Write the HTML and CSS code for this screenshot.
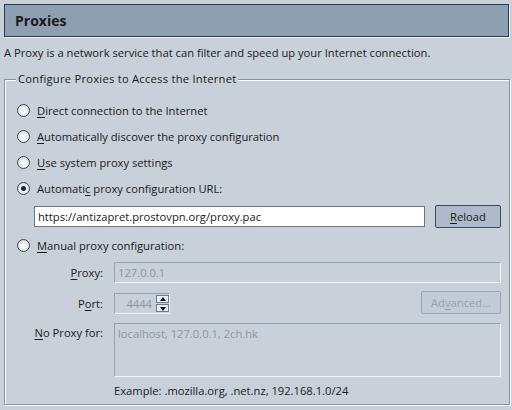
FILE: index.html
```html
<!DOCTYPE html>
<html lang="en">
<head>
    <meta charset="UTF-8">
    <title>Proxies</title>
    <link rel="stylesheet" href="styles.css">
</head>
<body>
    <div class="pane">
        <header class="pane-header">Proxies</header>
        <p class="pane-desc">A Proxy is a network service that can filter and speed up your Internet connection.</p>

        <fieldset class="group">
            <legend>Configure Proxies to Access the Internet</legend>

            <label class="radio-row"><input type="radio" name="mode"><span><u>D</u>irect connection to the Internet</span></label>
            <label class="radio-row"><input type="radio" name="mode"><span><u>A</u>utomatically discover the proxy configuration</span></label>
            <label class="radio-row"><input type="radio" name="mode"><span><u>U</u>se system proxy settings</span></label>
            <label class="radio-row"><input type="radio" name="mode" checked><span>Automati<u>c</u> proxy configuration URL:</span></label>

            <div class="url-row">
                <input class="field" type="text" value="https://antizapret.prostovpn.org/proxy.pac">
                <button class="btn"><u>R</u>eload</button>
            </div>

            <label class="radio-row"><input type="radio" name="mode"><span><u>M</u>anual proxy configuration:</span></label>

            <div class="manual">
                <span class="lbl"><u>P</u>roxy:</span>
                <input class="field disabled" type="text" value="127.0.0.1" disabled>

                <span class="lbl">P<u>o</u>rt:</span>
                <div class="port-row">
                    <div class="spin">
                        <input class="field disabled port" type="text" value="4444" disabled>
                        <div class="spin-btns">
                            <span class="arrow up"></span>
                            <span class="arrow down"></span>
                        </div>
                    </div>
                    <button class="btn" disabled>Ad<u>v</u>anced...</button>
                </div>

                <span class="lbl top"><u>N</u>o Proxy for:</span>
                <textarea class="field disabled area" disabled>localhost, 127.0.0.1, 2ch.hk</textarea>

                <span></span>
                <span class="example">Example: .mozilla.org, .net.nz, 192.168.1.0/24</span>
            </div>
        </fieldset>
    </div>
</body>
</html>
```

FILE: styles.css
```css
* {
    margin: 0;
    padding: 0;
    box-sizing: border-box;
}

body {
    font-family: "Open Sans", "Noto Sans", sans-serif;
    font-size: 11.2px;
    color: #1b1b1b;
    background: #c8d0d9;
    width: 512px;
    height: 410px;
    overflow: hidden;
}

.pane {
    padding: 4px 3px 0 4px;
}

/* 标题栏 */
.pane-header {
    height: 33px;
    background: #8e9fb1;
    border: 1px solid #303c4a;
    box-shadow: 1px 1px 0 #eef1f5;
    font-weight: bold;
    font-size: 14px;
    line-height: 31px;
    padding-left: 10px;
}

.pane-desc {
    margin-top: 7px;
    line-height: 18px;
}

/* 分组框 */
.group {
    margin-top: 9px;
    height: 334px;
    border: 1px solid #8893a0;
    box-shadow: 1px 1px 0 #fff, inset 1px 1px 0 #fff;
    padding: 10px 8px 0 12px;
}

.group legend {
    margin-left: -1px;
    padding: 0 2px;
    background: #c8d0d9;
    line-height: 16px;
    letter-spacing: 0.25px;
}

.radio-row {
    display: flex;
    align-items: center;
    gap: 7px;
    height: 26px;
}

.radio-row input {
    appearance: none;
    width: 13px;
    height: 13px;
    border-radius: 50%;
    border: 1px solid #3c4856;
    background: radial-gradient(circle at 50% 60%, #ffffff 0%, #e7eaee 55%, #b9c1ca 100%);
    display: grid;
    place-items: center;
}

.radio-row input:checked::after {
    content: '';
    width: 5px;
    height: 5px;
    border-radius: 50%;
    background: #1e2833;
}

u {
    text-decoration: underline;
    text-underline-offset: 2px;
}

.url-row {
    display: flex;
    gap: 10px;
    padding: 5px 0 4px 17px;
}

.field {
    font: inherit;
    color: inherit;
    height: 21px;
    padding: 0 3px;
    border: 1px solid #6b7684;
    background: #fff;
    outline: none;
}

.url-row .field {
    width: 391px;
}

.field.disabled {
    background: #c8d0d9;
    color: #8f979f;
    border-color: #97a2ae;
    border-right-color: #f1f4f7;
    border-bottom-color: #f1f4f7;
}

.btn {
    font: inherit;
    color: inherit;
    width: 66px;
    height: 23px;
    margin-top: -1px;
    background: #aebaca;
    border: 1px solid #3e4a58;
    border-radius: 2px;
}

.btn:disabled {
    width: 80px;
    color: #97a1ac;
    border-color: #9aa6b3;
    background: #c3ccd6;
}

/* 手动代理 */
.manual {
    display: grid;
    grid-template-columns: 83px 1fr;
    column-gap: 11px;
    row-gap: 9px;
    padding: 4px 0 0 3px;
    align-items: center;
}

.lbl {
    text-align: right;
}

.lbl.top {
    align-self: start;
    padding-top: 2px;
}

.port-row {
    display: flex;
    justify-content: space-between;
    align-items: center;
}

.spin {
    display: flex;
    width: 56px;
    height: 21px;
    border: 1px solid #97a2ae;
    border-right-color: #f1f4f7;
    border-bottom-color: #f1f4f7;
}

.field.port {
    border: none;
    height: 19px;
    width: 40px;
    text-align: right;
}

.spin-btns {
    display: flex;
    flex-direction: column;
    gap: 1px;
    padding: 1px;
}

.arrow {
    width: 13px;
    height: 8px;
    background: #e9edf1;
    border: 1px solid #6f7b88;
    position: relative;
}

.arrow::after {
    content: '';
    position: absolute;
    left: 2.5px;
    border-left: 3px solid transparent;
    border-right: 3px solid transparent;
}

.arrow.up::after {
    top: 1px;
    border-bottom: 4px solid #111;
}

.arrow.down::after {
    top: 2px;
    border-top: 4px solid #111;
}

.field.area {
    height: 54px;
    resize: none;
    padding: 2px 3px;
    line-height: 16px;
    overflow: hidden;
}

.example {
    margin-top: -3px;
}
```
